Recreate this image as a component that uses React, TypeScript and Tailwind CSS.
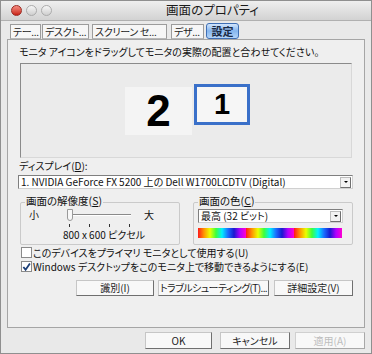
import React from 'react';

const jp = {
  fontFamily: '"Noto Sans CJK JP", "Noto Sans", sans-serif',
  fontFeatureSettings: '"palt"',
};

const Tab: React.FC<{ label: string; w: string; active?: boolean }> = ({ label, w, active }) =>
  active ? (
    <div
      className={`${w} h-[16px] flex items-center justify-center rounded-[3px] border border-[#3f6fb5] bg-gradient-to-b from-[#d2e5fc] via-[#86b6ee] to-[#b3d4f8] text-[11px] font-bold text-[#1a2a44] whitespace-nowrap`}
    >
      {label}
    </div>
  ) : (
    <div
      className={`${w} h-[15px] flex items-center pl-[2px] border border-[#9c9c9c] border-b-[#b8b8b8] bg-[#f6f6f6] text-[10px] tracking-[-0.3px] text-[#222] leading-[13px] whitespace-nowrap overflow-hidden`}
    >
      {label}
    </div>
  );

const Button: React.FC<{ label: string; w: string; h: string; disabled?: boolean; tight?: boolean }> = ({
  label,
  w,
  h,
  disabled,
  tight,
}) => (
  <div
    className={`${w} ${h} flex items-center justify-center border bg-[#f8f8f8] text-[10px] leading-[12px] whitespace-nowrap ${
      tight ? 'tracking-[-0.6px]' : ''
    } ${
      disabled
        ? 'text-[#bdbdbd] border-[#d0d0d0] border-r-[#a8a8a8] border-b-[#a8a8a8]'
        : 'text-[#1c1c1c] border-[#c6c6c6] border-r-[#6f6f6f] border-b-[#6f6f6f]'
    }`}
  >
    {label}
  </div>
);

const Select: React.FC<{ label: string; w: string }> = ({ label, w }) => (
  <div className={`${w} h-[14px] flex items-center bg-white border border-[#7f7f7f] border-r-[#d0d0d0] border-b-[#d0d0d0] pl-[2px]`}>
    <span className="flex-1 min-w-0 text-[10px] leading-[12px] text-[#111] whitespace-nowrap">{label}</span>
    <div className="w-[11px] h-[11px] mr-[1px] flex items-center justify-center bg-[#f2f2f2] border border-[#bdbdbd] border-r-[#707070] border-b-[#707070]">
      <div className="w-0 h-0 border-l-[2px] border-r-[2px] border-t-[2px] border-l-transparent border-r-transparent border-t-black" />
    </div>
  </div>
);

const Check: React.FC<{ label: string; checked?: boolean }> = ({ label, checked }) => (
  <div className="flex items-center gap-[1px] h-[13px]">
    <div className="w-[11px] h-[11px] border border-[#8a8a8a] bg-white flex items-center justify-center">
      {checked && (
        <svg width="10" height="10" viewBox="0 0 10 10">
          <path d="M1.5 5 L4 8 L8.8 1.2" stroke="#1d3f78" strokeWidth="2" fill="none" />
        </svg>
      )}
    </div>
    <span className="text-[10px] leading-[12px] text-[#111] whitespace-nowrap">{label}</span>
  </div>
);

const colors = ['#ff1a1a', '#ff9500', '#eaff00', '#3cff3c', '#00f0ff', '#1a6dff', '#1a1ad0', '#b000ff', '#ff00d0'];

const num = { fontFamily: '"Liberation Sans", Arial, sans-serif' };

export default function App() {
  return (
    <div style={jp} className="w-[372px] h-[354px] bg-[#e9e9e9] border border-[#8f8f8f] flex flex-col overflow-hidden">
      {/* title bar */}
      <div className="h-[20px] flex items-center bg-gradient-to-b from-[#efefef] to-[#d2d2d2] border-b border-[#b0b0b0]">
        <div className="flex gap-[4px] pl-[10px]">
          <div className="w-[11px] h-[11px] rounded-full bg-gradient-to-b from-[#f48a80] to-[#c81a10] border border-[#9b2a22]" />
          <div className="w-[11px] h-[11px] rounded-full bg-gradient-to-b from-[#f6f6f6] to-[#cfcfcf] border border-[#ababab]" />
          <div className="w-[11px] h-[11px] rounded-full bg-gradient-to-b from-[#f6f6f6] to-[#cfcfcf] border border-[#ababab]" />
        </div>
        <div className="flex-1 text-center pl-[2px] text-[12.5px] text-[#1a1a1a] leading-none">画面のプロパティ</div>
      </div>

      {/* tabs */}
      <div className="mt-[2px] h-[16px] flex items-end pl-[9px]">
        <Tab label="テー..." w="w-[31px]" />
        <div className="w-[1px]" />
        <Tab label="デスクト..." w="w-[47px]" />
        <div className="w-[3px]" />
        <Tab label="スクリーン セ..." w="w-[75px]" />
        <div className="w-[4px]" />
        <Tab label="デザ..." w="w-[33px]" />
        <div className="w-[2px]" />
        <Tab label="設定" w="w-[33px]" active />
      </div>

      {/* panel */}
      <div className="mx-[6px] h-[289px] border border-[#a5a5a5] bg-[#efefef] flex flex-col px-[10px]">
        <p className="mt-[5px] pl-[1px] text-[10px] leading-[13px] text-[#111] whitespace-nowrap">
          モニタ アイコンをドラッグしてモニタの実際の配置と合わせてください。
        </p>

        <div className="mt-[5px] ml-[2px] w-[332px] h-[95px] border border-t-[#8a8a8a] border-l-[#8a8a8a] border-b-[#d8d8d8] border-r-[#d8d8d8] bg-[#ebebeb] flex items-start pt-[20px] pl-[104px]">
          <div className="w-[67px] h-[48px] bg-[#f4f4f4] flex items-center justify-center mt-[3px]">
            <span style={num} className="text-[44px] font-bold leading-none text-black">2</span>
          </div>
          <div className="ml-[2px] w-[56px] h-[41px] border-[3px] border-[#3a70c9] bg-[#f6f6f6] flex items-center justify-center">
            <span style={num} className="text-[29px] font-bold leading-none text-black">1</span>
          </div>
        </div>

        <p className="mt-[2px] pl-[1px] text-[10px] leading-[12px] text-[#111]">
          ディスプレイ(<span className="underline">D</span>):
        </p>
        <div className="mt-[3px]">
          <Select label="1. NVIDIA GeForce FX 5200  上の Dell W1700LCDTV (Digital)" w="w-[335px]" />
        </div>

        <div className="mt-[13px] ml-[2px] flex gap-[13px]">
          {/* resolution */}
          <div className="relative w-[160px] h-[43px] border border-[#cacaca] rounded-[2px]">
            <span className="absolute -top-[9px] left-[4px] bg-[#efefef] px-[1px] text-[10.5px] leading-[13px] text-[#111] whitespace-nowrap">
              画面の解像度(<span className="underline">S</span>)
            </span>
            <div className="flex items-center mt-[6px] pl-[8px] h-[12px]">
              <span className="text-[10px] leading-none text-[#111]">小</span>
              <div className="relative ml-[30px] w-[62px] h-[12px]">
                <div className="absolute top-[5px] left-0 right-0 h-[2px] border-t border-[#8a8a8a] border-b border-b-white" />
                <div className="absolute top-0 -left-[2px] w-[6px] h-[12px] bg-[#f8f8f8] border border-[#9a9a9a] rounded-b-[3px]" />
              </div>
              <span className="ml-[13px] text-[10px] leading-none text-[#111]">大</span>
            </div>
            <div className="flex pl-[48px] gap-[19px] mt-[3px]">
              <div className="w-[1px] h-[3px] bg-[#333]" />
              <div className="w-[1px] h-[3px] bg-[#333]" />
              <div className="w-[1px] h-[3px] bg-[#333]" />
              <div className="w-[1px] h-[3px] bg-[#333]" />
            </div>
            <p className="mt-[3px] pl-[42px] text-[10px] leading-none text-[#111] whitespace-nowrap">800 x 600 ピクセル</p>
          </div>

          {/* color */}
          <div className="relative w-[160px] h-[43px] border border-[#cacaca] rounded-[2px] px-[4px]">
            <span className="absolute -top-[9px] left-[4px] bg-[#efefef] px-[1px] text-[10.5px] leading-[13px] text-[#111] whitespace-nowrap">
              画面の色(<span className="underline">C</span>)
            </span>
            <div className="mt-[6px]">
              <Select label="最高 (32 ビット)" w="w-[145px]" />
            </div>
            <div className="mt-[5px] w-[144px] h-[10px] flex">
              {[0, 1, 2].map((k) => (
                <div key={k} className="flex-1 h-full" style={{ background: `linear-gradient(to right, ${colors.join(', ')})` }} />
              ))}
            </div>
          </div>
        </div>

        <div className="mt-[1px] pl-[3px] flex flex-col gap-[1px]">
          <Check label="このデバイスをプライマリ モニタとして使用する(U)" />
          <Check label="Windows デスクトップをこのモニタ上で移動できるようにする(E)" checked />
        </div>

        <div className="mt-[7px] flex justify-end pr-[1px]">
          <Button label="識別(I)" w="w-[78px]" h="h-[16px]" />
          <div className="w-[4px]" />
          <Button label="トラブルシューティング(T)..." w="w-[111px]" h="h-[16px]" tight />
          <div className="w-[5px]" />
          <Button label="詳細設定(V)" w="w-[79px]" h="h-[16px]" />
        </div>
      </div>

      {/* bottom buttons */}
      <div className="mt-[4px] flex justify-end pr-[6px]">
        <Button label="OK" w="w-[67px]" h="h-[17px]" />
        <div className="w-[8px]" />
        <Button label="キャンセル" w="w-[70px]" h="h-[17px]" />
        <div className="w-[5px]" />
        <Button label="適用(A)" w="w-[70px]" h="h-[17px]" disabled />
      </div>
    </div>
  );
}
